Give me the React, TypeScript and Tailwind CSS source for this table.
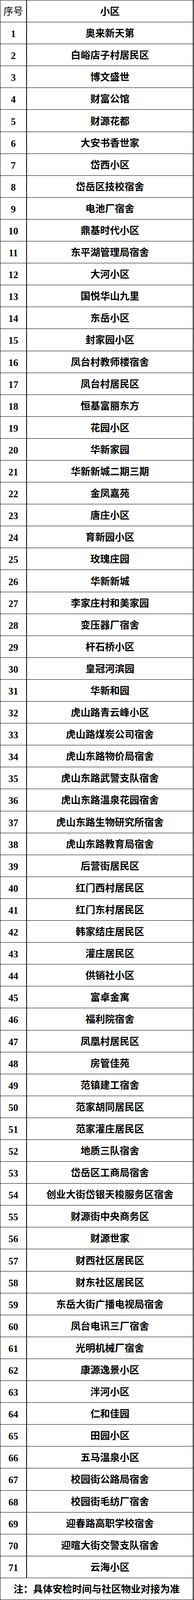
import React from "react";

const names: string[] = [
  "奥来新天第",
  "白峪店子村居民区",
  "博文盛世",
  "财富公馆",
  "财源花都",
  "大安书香世家",
  "岱西小区",
  "岱岳区技校宿舍",
  "电池厂宿舍",
  "鼎基时代小区",
  "东平湖管理局宿舍",
  "大河小区",
  "国悦华山九里",
  "东岳小区",
  "封家园小区",
  "凤台村教师楼宿舍",
  "凤台村居民区",
  "恒基富丽东方",
  "花园小区",
  "华新家园",
  "华新新城二期三期",
  "金凤嘉苑",
  "唐庄小区",
  "育新园小区",
  "玫瑰庄园",
  "华新新城",
  "李家庄村和美家园",
  "变压器厂宿舍",
  "杆石桥小区",
  "皇冠河滨园",
  "华新和园",
  "虎山路青云峰小区",
  "虎山路煤炭公司宿舍",
  "虎山东路物价局宿舍",
  "虎山东路武警支队宿舍",
  "虎山东路温泉花园宿舍",
  "虎山东路生物研究所宿舍",
  "虎山东路教育局宿舍",
  "后营街居民区",
  "红门西村居民区",
  "红门东村居民区",
  "韩家结庄居民区",
  "灌庄居民区",
  "供销社小区",
  "富卓金寓",
  "福利院宿舍",
  "凤凰村居民区",
  "房管佳苑",
  "范镇建工宿舍",
  "范家胡同居民区",
  "范家灌庄居民区",
  "地质三队宿舍",
  "岱岳区工商局宿舍",
  "创业大街岱银天梭服务区宿舍",
  "财源街中央商务区",
  "财源世家",
  "财西社区居民区",
  "财东社区居民区",
  "东岳大街广播电视局宿舍",
  "凤台电讯三厂宿舍",
  "光明机械厂宿舍",
  "康源逸景小区",
  "泮河小区",
  "仁和佳园",
  "田园小区",
  "五马温泉小区",
  "校园街公路局宿舍",
  "校园街毛纺厂宿舍",
  "迎春路高职学校宿舍",
  "迎暄大街交警支队宿舍",
  "云海小区",
];

const font = { fontFamily: "'Liberation Serif','Noto Sans CJK SC',serif" };

export default function App() {
  return (
    <div className="bg-white w-[496px] h-screen max-h-[4838px] overflow-hidden">
      <div
        className="w-[495px] h-full grid grid-rows-[repeat(73,minmax(0,1fr))] border-l border-t border-r-2 border-black text-black text-[25px] leading-none"
        style={font}
      >
        <div className="flex min-h-0 border-b border-black">
          <div className="w-[68px] shrink-0 border-r-2 border-black flex items-center justify-center pt-[2px] font-normal">
            序号
          </div>
          <div className="flex-1 flex items-center justify-center pt-[2px] font-bold">
            小区
          </div>
        </div>
        {names.map((n, i) => (
          <div key={i} className="flex min-h-0 border-b border-black">
            <div className="w-[68px] shrink-0 border-r-2 border-black flex items-center justify-center pt-[4px] font-bold">
              {i + 1}
            </div>
            <div className="flex-1 flex items-center justify-center pt-[2px] font-bold whitespace-nowrap">
              {n}
            </div>
          </div>
        ))}
        <div className="flex min-h-0 border-b border-black items-center justify-center pt-[2px] font-bold whitespace-nowrap">
          注：具体安检时间与社区物业对接为准
        </div>
      </div>
    </div>
  );
}
